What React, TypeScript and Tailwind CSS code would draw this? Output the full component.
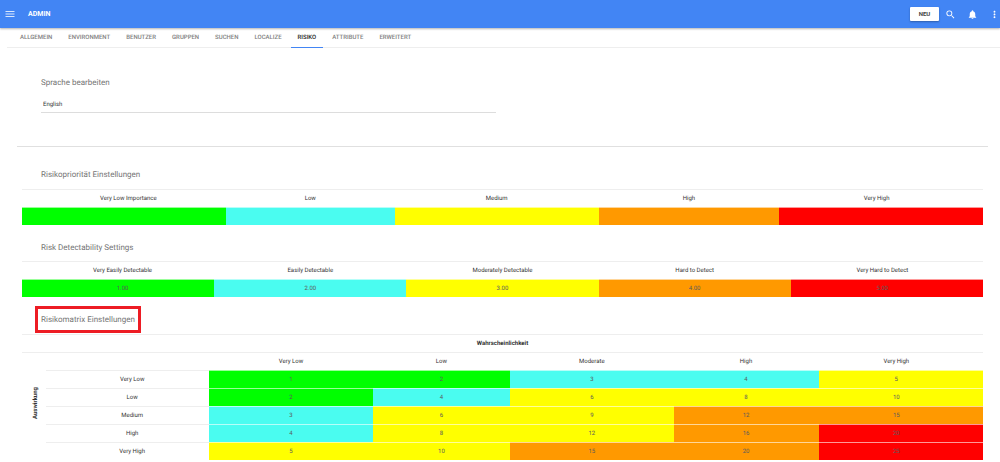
import { MdMenu, MdMoreVert, MdNotifications, MdSearch } from 'react-icons/md'

const tabs = [
  'ALLGEMEIN',
  'ENVIRONMENT',
  'BENUTZER',
  'GRUPPEN',
  'SUCHEN',
  'LOCALIZE',
  'RISIKO',
  'ATTRIBUTE',
  'ERWEITERT',
]

const colors = {
  green: 'bg-[#00ff00]',
  cyan: 'bg-[#4afcf0]',
  yellow: 'bg-[#ffff00]',
  orange: 'bg-[#ff9900]',
  red: 'bg-[#ff0000]',
}

const scale = [colors.green, colors.cyan, colors.yellow, colors.orange, colors.red]

const priorities = ['Very Low Importance', 'Low', 'Medium', 'High', 'Very High']
const priorityWidths = ['w-[21.2%]', 'w-[17.6%]', 'w-[21.2%]', 'w-[18.8%]', 'w-[21.2%]']

const detectability = [
  { label: 'Very Easily Detectable', value: '1.00' },
  { label: 'Easily Detectable', value: '2.00' },
  { label: 'Moderately Detectable', value: '3.00' },
  { label: 'Hard to Detect', value: '4.00' },
  { label: 'Very Hard to Detect', value: '5.00' },
]

const likelihoods = ['Very Low', 'Low', 'Moderate', 'High', 'Very High']
const impacts = ['Very Low', 'Low', 'Medium', 'High', 'Very High']

// rows are impacts, columns are likelihoods
const matrixColors = [
  [colors.green, colors.green, colors.cyan, colors.cyan, colors.yellow],
  [colors.green, colors.cyan, colors.yellow, colors.yellow, colors.yellow],
  [colors.cyan, colors.yellow, colors.yellow, colors.orange, colors.orange],
  [colors.cyan, colors.yellow, colors.yellow, colors.orange, colors.red],
  [colors.yellow, colors.yellow, colors.orange, colors.orange, colors.red],
]

const tableStyle = 'w-full table-fixed border-separate border-spacing-0 text-center text-[6px] leading-[8px]'
const cell = 'border-t p-0 first:pl-[9px] last:pr-[9px]'
const headCell = `${cell} h-[18px] border-[#eeeeee] font-normal text-[#333333]`
const valueCell = `${cell} h-[18px] border-white/60 text-[#5c5c5c]`
const sectionTitle = 'text-[8px] leading-[12px] text-[#757575]'

const Header = () => {
  return (
    <header className="flex h-7 items-center bg-[#4285f4] pl-1 text-white shadow-[0_1px_2px_rgba(0,0,0,0.3)]">
      <button type="button" aria-label="Menu" className="text-white/80">
        <MdMenu className="size-3" />
      </button>
      <h1 className="ml-3 text-[7px] font-bold leading-[10px]">ADMIN</h1>
      <div className="ml-auto flex items-center">
        <button
          type="button"
          className="h-[14px] w-[29px] rounded-[1px] bg-white text-[6px] font-bold leading-[8px] text-[#444444] shadow-[0_1px_2px_rgba(0,0,0,0.3)]"
        >
          NEU
        </button>
        <button type="button" aria-label="Suchen" className="ml-1.5">
          <MdSearch className="size-[11px]" />
        </button>
        <button type="button" aria-label="Benachrichtigungen" className="ml-[11px]">
          <MdNotifications className="size-[11px]" />
        </button>
        <button type="button" aria-label="Mehr" className="ml-[11px]">
          <MdMoreVert className="size-[11px]" />
        </button>
      </div>
    </header>
  )
}

const Tabs = () => {
  return (
    <nav className="ml-[7px] flex h-5 border-b border-[#eeeeee] pl-1.5 text-[6px] font-medium leading-5">
      {tabs.map((tab) => (
        <a
          key={tab}
          href="#"
          className={
            tab === 'RISIKO'
              ? 'mr-0.5 h-5 border-b border-[#4285f4] px-[7px] text-[#212121]'
              : 'mr-0.5 h-5 px-[7px] text-[#808080]'
          }
        >
          {tab}
        </a>
      ))}
    </nav>
  )
}

const PriorityTable = () => {
  return (
    <table className={tableStyle}>
      <thead>
        <tr>
          {priorities.map((label, i) => (
            <th key={label} scope="col" className={`${headCell} ${priorityWidths[i]}`}>
              {label}
            </th>
          ))}
        </tr>
      </thead>
      <tbody>
        <tr>
          {priorities.map((label, i) => (
            <td key={label} className={`${valueCell} ${scale[i]}`} />
          ))}
        </tr>
      </tbody>
    </table>
  )
}

const DetectabilityTable = () => {
  return (
    <table className={tableStyle}>
      <thead>
        <tr>
          {detectability.map((item) => (
            <th key={item.label} scope="col" className={`${headCell} w-1/5`}>
              {item.label}
            </th>
          ))}
        </tr>
      </thead>
      <tbody>
        <tr>
          {detectability.map((item, i) => (
            <td key={item.label} className={`${valueCell} ${scale[i]}`}>
              {item.value}
            </td>
          ))}
        </tr>
      </tbody>
    </table>
  )
}

const MatrixTable = () => {
  return (
    <table className={tableStyle}>
      <colgroup>
        <col className="w-[24px]" />
        <col className="w-[17%]" />
        <col className="w-[17%]" />
        <col className="w-[14.3%]" />
        <col className="w-[17%]" />
        <col className="w-[15.1%]" />
        <col />
      </colgroup>
      <thead>
        <tr>
          <th colSpan={7} className="h-[18px] border-t border-[#eeeeee] p-0 font-bold text-[#333333]">
            Wahrscheinlichkeit
          </th>
        </tr>
      </thead>
      <tbody>
        <tr>
          <th rowSpan={6} scope="rowgroup" className="border-t border-[#eeeeee] p-0 pl-1 pb-1 text-[#333333]">
            <span className="inline-block rotate-180 [writing-mode:vertical-rl]">Auswirkung</span>
          </th>
          <td className="border-t border-[#eeeeee]" />
          {likelihoods.map((label) => (
            <th key={label} scope="col" className={headCell}>
              {label}
            </th>
          ))}
        </tr>
        {impacts.map((impact, row) => (
          <tr key={impact}>
            <th scope="row" className={headCell}>
              {impact}
            </th>
            {matrixColors[row].map((color, col) => (
              <td key={col} className={`${valueCell} ${color}`}>
                {(row + 1) * (col + 1)}
              </td>
            ))}
          </tr>
        ))}
      </tbody>
    </table>
  )
}

const App = () => {
  return (
    <div className="bg-white font-['Roboto',sans-serif] [text-rendering:geometricPrecision]">
      <Header />
      <Tabs />
      <main className="ml-[17px] mr-3">
        <section className="border-b border-[#e0e0e0] pb-[33px] pl-6 pt-[29px]">
          <label htmlFor="language" className={`block ${sectionTitle}`}>
            Sprache bearbeiten
          </label>
          <select
            id="language"
            className="mt-[7px] block h-[17px] w-[48%] appearance-none border-b border-[#dddddd] bg-transparent px-0.5 pt-0.5 text-[6px] leading-[8px] text-[#333333] [text-rendering:geometricPrecision]"
          >
            <option>English</option>
          </select>
        </section>
        <div className="px-[5px]">
          <h2 className={`pb-2 pl-[19px] pt-[22px] ${sectionTitle}`}>Risikopriorität Einstellungen</h2>
          <PriorityTable />
          <h2 className={`pb-[7px] pl-[19px] pt-[17px] ${sectionTitle}`}>Risk Detectability Settings</h2>
          <DetectabilityTable />
          <div className="pb-px pl-[13px] pt-[9px]">
            <h2 className={`inline-block border-[3px] border-[#ed1c24] px-[3px] pb-1 pt-[5px] align-top ${sectionTitle}`}>
              Risikomatrix Einstellungen
            </h2>
          </div>
          <MatrixTable />
        </div>
      </main>
    </div>
  )
}

export default App
